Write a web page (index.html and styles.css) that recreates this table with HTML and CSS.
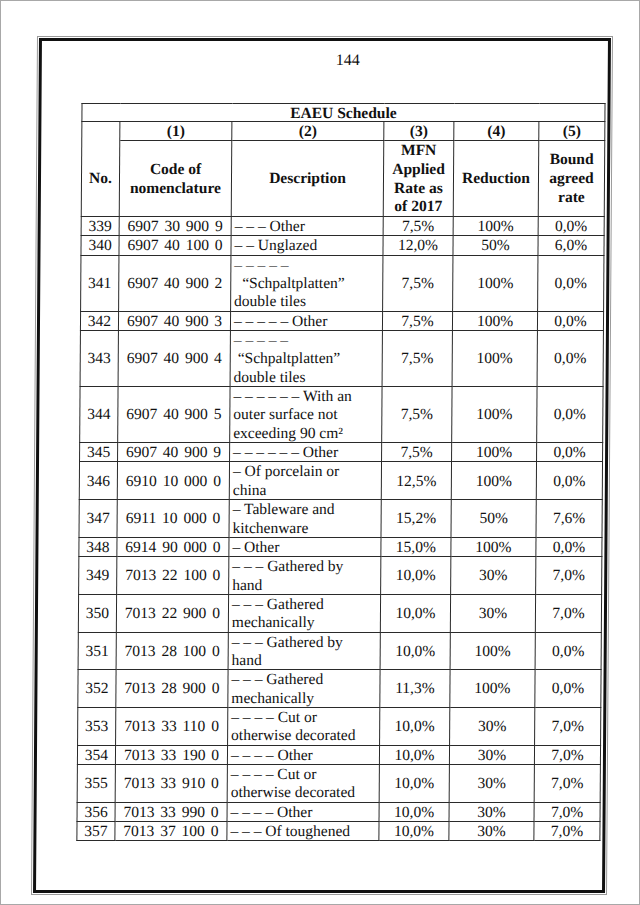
FILE: index.html
```html
<!DOCTYPE html>
<html lang="en">
<head>
<meta charset="utf-8">
<title>EAEU Schedule – 144</title>
<link rel="stylesheet" href="styles.css">
</head>
<body>
<div class="page">
  <div class="frame">
    <div class="pagenum">144</div>
    <table class="sched">
      <colgroup>
        <col class="c-no"><col class="c-code"><col class="c-desc"><col class="c-mfn"><col class="c-red"><col class="c-bnd">
      </colgroup>
      <thead>
        <tr class="title"><th colspan="6">EAEU Schedule</th></tr>
        <tr class="nums"><th class="blank"></th><th>(1)</th><th>(2)</th><th>(3)</th><th>(4)</th><th>(5)</th></tr>
        <tr class="heads">
          <th class="no">No.</th>
          <th>Code of<br>nomenclature</th>
          <th>Description</th>
          <th>MFN<br>Applied<br>Rate as<br>of 2017</th>
          <th>Reduction</th>
          <th>Bound<br>agreed<br>rate</th>
        </tr>
      </thead>
      <tbody>
        <tr><td>339</td><td class="code">6907 30 900 9</td><td class="desc">– – – Other</td><td>7,5%</td><td>100%</td><td>0,0%</td></tr>
        <tr><td>340</td><td class="code">6907 40 100 0</td><td class="desc">– – Unglazed</td><td>12,0%</td><td>50%</td><td>6,0%</td></tr>
        <tr><td>341</td><td class="code">6907 40 900 2</td><td class="desc"><span class="dash">– – – – –</span><br><span class="ind">“Schpaltplatten”</span><br>double tiles</td><td>7,5%</td><td>100%</td><td>0,0%</td></tr>
        <tr><td>342</td><td class="code">6907 40 900 3</td><td class="desc">– – – – – Other</td><td>7,5%</td><td>100%</td><td>0,0%</td></tr>
        <tr><td>343</td><td class="code">6907 40 900 4</td><td class="desc"><span class="dash">– – – – –</span><br><span class="ind-s">“Schpaltplatten”</span><br>double tiles</td><td>7,5%</td><td>100%</td><td>0,0%</td></tr>
        <tr><td>344</td><td class="code">6907 40 900 5</td><td class="desc">– – – – – – With an<br>outer surface not<br>exceeding 90 cm²</td><td>7,5%</td><td>100%</td><td>0,0%</td></tr>
        <tr><td>345</td><td class="code">6907 40 900 9</td><td class="desc">– – – – – – Other</td><td>7,5%</td><td>100%</td><td>0,0%</td></tr>
        <tr><td>346</td><td class="code">6910 10 000 0</td><td class="desc">– Of porcelain or<br>china</td><td>12,5%</td><td>100%</td><td>0,0%</td></tr>
        <tr><td>347</td><td class="code">6911 10 000 0</td><td class="desc">– Tableware and<br>kitchenware</td><td>15,2%</td><td>50%</td><td>7,6%</td></tr>
        <tr><td>348</td><td class="code">6914 90 000 0</td><td class="desc">– Other</td><td>15,0%</td><td>100%</td><td>0,0%</td></tr>
        <tr><td>349</td><td class="code">7013 22 100 0</td><td class="desc">– – – Gathered by<br>hand</td><td>10,0%</td><td>30%</td><td>7,0%</td></tr>
        <tr><td>350</td><td class="code">7013 22 900 0</td><td class="desc">– – – Gathered<br>mechanically</td><td>10,0%</td><td>30%</td><td>7,0%</td></tr>
        <tr><td>351</td><td class="code">7013 28 100 0</td><td class="desc">– – – Gathered by<br>hand</td><td>10,0%</td><td>100%</td><td>0,0%</td></tr>
        <tr><td>352</td><td class="code">7013 28 900 0</td><td class="desc">– – – Gathered<br>mechanically</td><td>11,3%</td><td>100%</td><td>0,0%</td></tr>
        <tr><td>353</td><td class="code">7013 33 110 0</td><td class="desc">– – – – Cut or<br>otherwise decorated</td><td>10,0%</td><td>30%</td><td>7,0%</td></tr>
        <tr><td>354</td><td class="code">7013 33 190 0</td><td class="desc">– – – – Other</td><td>10,0%</td><td>30%</td><td>7,0%</td></tr>
        <tr><td>355</td><td class="code">7013 33 910 0</td><td class="desc">– – – – Cut or<br>otherwise decorated</td><td>10,0%</td><td>30%</td><td>7,0%</td></tr>
        <tr><td>356</td><td class="code">7013 33 990 0</td><td class="desc">– – – – Other</td><td>10,0%</td><td>30%</td><td>7,0%</td></tr>
        <tr><td>357</td><td class="code">7013 37 100 0</td><td class="desc">– – – Of toughened</td><td>10,0%</td><td>30%</td><td>7,0%</td></tr>
      </tbody>
    </table>
  </div>
</div>
</body>
</html>
```
FILE: styles.css
```css
html, body {
  margin: 0;
  padding: 0;
  background: #ffffff;
}

.page {
  width: 640px;
  height: 905px;
  box-sizing: border-box;
  border: 1px solid #a8a8a8;
  padding: 37px 0 0 35px;
  overflow: hidden;
  font-family: "Liberation Serif", "Times New Roman", serif;
  color: #111111;
}

.frame {
  box-sizing: border-box;
  width: 572px;
  height: 855px;
  border: 3px solid #111111;
  outline: 1px solid #9a9a9a;
  outline-offset: 1px;
  padding-top: 10px;
  transform: skewX(-0.4deg);
  transform-origin: center center;
}

.pagenum {
  font-size: 16px;
  line-height: 18px;
  text-align: center;
  padding-left: 46px;
}

.sched {
  margin: 34px 0 0 40px;
  border-collapse: collapse;
  table-layout: fixed;
  width: 523px;
  font-size: 15.5px;
}

.c-no { width: 38px; }
.c-code { width: 112px; }
.c-desc { width: 152px; }
.c-mfn { width: 70px; }
.c-red { width: 85px; }
.c-bnd { width: 66px; }

.sched th,
.sched td {
  border: 1px solid #2a2a2a;
  padding: 0;
  text-align: center;
  vertical-align: middle;
}

.sched th {
  font-weight: bold;
}

.title th {
  line-height: 17px;
}

.nums th {
  line-height: 18px;
}

.nums .blank {
  border-bottom-style: hidden;
}

.heads th {
  line-height: 18.75px;
}

.sched td {
  line-height: 18.35px;
  white-space: nowrap;
}

.sched td.code {
  word-spacing: 2px;
}

.sched td.desc {
  text-align: left;
  padding-left: 3px;
}

.dash {
  color: #555555;
}

.ind {
  padding-left: 8px;
}

.ind-s {
  padding-left: 4px;
}
```
